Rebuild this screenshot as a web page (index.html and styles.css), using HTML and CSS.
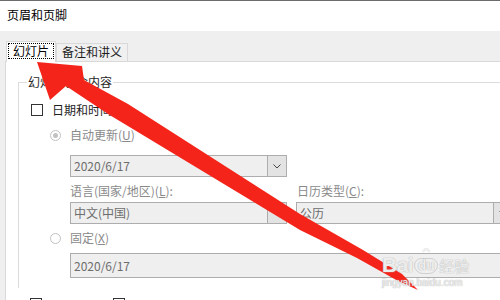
FILE: index.html
```html
<!DOCTYPE html>
<html lang="zh-CN">
<head>
    <meta charset="UTF-8">
    <title>页眉和页脚</title>
    <link rel="stylesheet" href="styles.css">
</head>
<body>

<div class="topline"></div>
<div class="title">页眉和页脚</div>

<!-- Schede -->
<div class="tabs">
    <div class="tab tab-active"><span class="focus">幻灯片</span></div>
    <div class="tab">备注和讲义</div>
</div>

<div class="panel">
    <div class="group">
        <div class="legend">幻灯片包含内容</div>

        <div class="row check-row">
            <span class="checkbox"></span>
            <span class="label">日期和时间(<u>D</u>)</span>
        </div>

        <div class="row radio-row">
            <span class="radio checked"></span>
            <span class="label dim">自动更新(<u>U</u>)</span>
        </div>

        <div class="combo combo-first">
            <span class="combo-text">2020/6/17</span>
            <span class="drop"><svg width="8" height="5" viewBox="0 0 8 5"><path d="M0.5 0.5 L4 4 L7.5 0.5" fill="none" stroke="#444" stroke-width="1"/></svg></span>
        </div>

        <div class="pair pair-labels">
            <span class="label dim col-left">语言(国家/地区)(<u>L</u>):</span>
            <span class="label dim">日历类型(<u>C</u>):</span>
        </div>

        <div class="pair pair-combos">
            <div class="combo">
                <span class="combo-text">中文(中国)</span>
                <span class="drop"><svg width="8" height="5" viewBox="0 0 8 5"><path d="M0.5 0.5 L4 4 L7.5 0.5" fill="none" stroke="#444" stroke-width="1"/></svg></span>
            </div>
            <div class="combo">
                <span class="combo-text">公历</span>
                <span class="drop"><svg width="8" height="5" viewBox="0 0 8 5"><path d="M0.5 0.5 L4 4 L7.5 0.5" fill="none" stroke="#444" stroke-width="1"/></svg></span>
            </div>
        </div>

        <div class="row radio-row2">
            <span class="radio"></span>
            <span class="label dim">固定(<u>X</u>)</span>
        </div>

        <div class="textbox">2020/6/17</div>
    </div>

    <div class="more">
        <span class="checkbox"></span>
        <span class="checkbox"></span>
    </div>
</div>

<!-- Freccia rossa sopra il dialogo -->
<svg class="arrow" width="500" height="300" viewBox="0 0 500 300">
    <polygon fill="#f5241a" points="37,62 82,66 84,80 128,104 300,214 363,250 402,274 418,290 398,281 357,258 300,230 108,114 66,86 50,100"/>
</svg>

<!-- Filigrana -->
<div class="watermark">
    <div class="wm-top">
        <span class="wm-bai">Bai</span>
        <span class="wm-paw">
            <svg width="24" height="28" viewBox="0 0 24 28">
                <g fill="rgba(255,255,255,0.6)" stroke="#cfcfcf" stroke-width="1.2">
                    <ellipse cx="5" cy="8" rx="2.6" ry="3.2"/>
                    <ellipse cx="10" cy="3.8" rx="2.6" ry="3.2"/>
                    <ellipse cx="15.5" cy="3.8" rx="2.6" ry="3.2"/>
                    <ellipse cx="20" cy="8" rx="2.6" ry="3.2"/>
                </g>
            </svg>
            <span class="wm-du">du</span>
        </span>
        <span class="wm-cn">经验</span>
    </div>
    <div class="wm-url">jingyan.baidu.com</div>
</div>

</body>
</html>
```

FILE: styles.css
```css
html, body {
    overflow: hidden;
}
body {
    margin: 0;
    width: 500px;
    height: 300px;
    background: #efefef;
    font-family: "Noto Sans CJK SC", "Noto Sans", sans-serif;
    font-size: 12px;
    color: #1e1e1e;
    position: relative;
}
u {
    text-decoration-thickness: 1px;
    text-underline-offset: 1px;
}
.topline {
    height: 1px;
    background: #6b6b6b;
}
.title {
    height: 30px;
    line-height: 28px;
    padding-left: 7px;
    background: #fff;
    color: #000;
}
.tabs {
    display: flex;
    align-items: flex-end;
    height: 30px;
    padding-left: 6px;
}
.tab {
    height: 18px;
    line-height: 16px;
    padding: 0 5px;
    border: 1px solid #d9d9d9;
    border-bottom: none;
    background: #f0f0f0;
    box-sizing: border-box;
}
.tab-active {
    position: relative;
    z-index: 1;
    height: 21px;
    width: 50px;
    padding: 1px;
    margin-bottom: -1px;
    background: #fff;
}
.focus {
    display: block;
    height: 16px;
    padding: 0 4px;
    border: 1px dotted #000;
    box-sizing: border-box;
    line-height: 14px;
    color: #000;
}
.panel {
    margin-left: 5px;
    width: 520px;
    height: 260px;
    padding: 20px 0 0 12px;
    border-top: 1px solid #d9d9d9;
    border-left: 1px solid #d9d9d9;
    background: #fff;
}
.group {
    border-top: 1px solid #dcdcdc;
    border-left: 1px solid #dcdcdc;
    padding-bottom: 10px;
}
.legend {
    width: max-content;
    height: 16px;
    line-height: 16px;
    margin: -9px 0 0 8px;
    padding: 0 1px;
    background: #fff;
}
.row {
    display: flex;
    align-items: center;
    height: 16px;
}
.check-row {
    margin: 12px 0 0 12px;
}
.radio-row {
    margin: 9px 0 0 31px;
}
.radio-row2 {
    margin: 6px 0 0 31px;
}
.checkbox {
    display: inline-block;
    width: 12px;
    height: 12px;
    border: 1px solid #333;
    box-sizing: border-box;
    background: #fff;
}
.check-row .label {
    margin-left: 9px;
}
.radio {
    width: 11px;
    height: 11px;
    border: 1px solid #c2c2c2;
    border-radius: 50%;
    box-sizing: border-box;
    display: flex;
    align-items: center;
    justify-content: center;
}
.radio.checked::after {
    content: "";
    width: 5px;
    height: 5px;
    border-radius: 50%;
    background: #c2c2c2;
}
.radio + .label {
    margin-left: 9px;
}
.label {
    line-height: 16px;
    white-space: nowrap;
}
.dim {
    color: #8a8a8a;
}
.combo {
    display: flex;
    width: 217px;
    height: 22px;
    border: 1px solid #adadad;
    box-sizing: border-box;
    background: #efefef;
    color: #6d6d6d;
}
.combo-first {
    margin: 12px 0 0 51px;
}
.combo-text {
    flex: 1;
    padding-left: 3px;
    line-height: 20px;
}
.drop {
    width: 18px;
    border-left: 1px solid #adadad;
    background: #e3e3e3;
    display: flex;
    align-items: center;
    justify-content: center;
}
.pair {
    display: flex;
    margin-left: 51px;
}
.pair-labels {
    margin-top: 6px;
    height: 16px;
}
.col-left {
    width: 227px;
}
.pair-combos {
    margin-top: 3px;
    gap: 9px;
}
.textbox {
    margin: 7px 0 0 51px;
    width: 460px;
    height: 25px;
    line-height: 23px;
    padding-left: 3px;
    border: 1px solid #adadad;
    box-sizing: border-box;
    background: #efefef;
    color: #6d6d6d;
}
.more {
    display: flex;
    gap: 71px;
    margin: 10px 0 0 12px;
}
.arrow {
    position: absolute;
    left: 0;
    top: 0;
    pointer-events: none;
}

/* filigrana */
.watermark {
    position: absolute;
    left: 382px;
    top: 246px;
    width: 92px;
    color: rgba(255, 255, 255, 0.75);
    text-shadow: 0 0 1px #b8b8b8, 0 0 1px #b8b8b8;
    pointer-events: none;
}
.wm-top {
    display: flex;
    align-items: flex-end;
    height: 30px;
}
.wm-bai {
    font-family: "Liberation Sans", Arial, sans-serif;
    font-size: 21px;
    font-weight: bold;
    line-height: 22px;
    letter-spacing: -0.5px;
}
.wm-paw {
    display: flex;
    flex-direction: column;
    align-items: center;
    width: 24px;
    margin: 0 1px;
}
.wm-paw svg {
    display: block;
    height: 10px;
    width: 24px;
}
.wm-du {
    width: 24px;
    height: 16px;
    border: 1.2px solid #cfcfcf;
    border-radius: 9px 9px 11px 11px;
    box-sizing: border-box;
    font-family: "Liberation Sans", Arial, sans-serif;
    font-size: 14px;
    font-weight: bold;
    line-height: 13px;
    text-align: center;
    margin-bottom: 2px;
}
.wm-cn {
    font-size: 15px;
    line-height: 20px;
}
.wm-url {
    font-family: "Liberation Sans", Arial, sans-serif;
    font-size: 10px;
    line-height: 12px;
    margin-top: 1px;
}
```
